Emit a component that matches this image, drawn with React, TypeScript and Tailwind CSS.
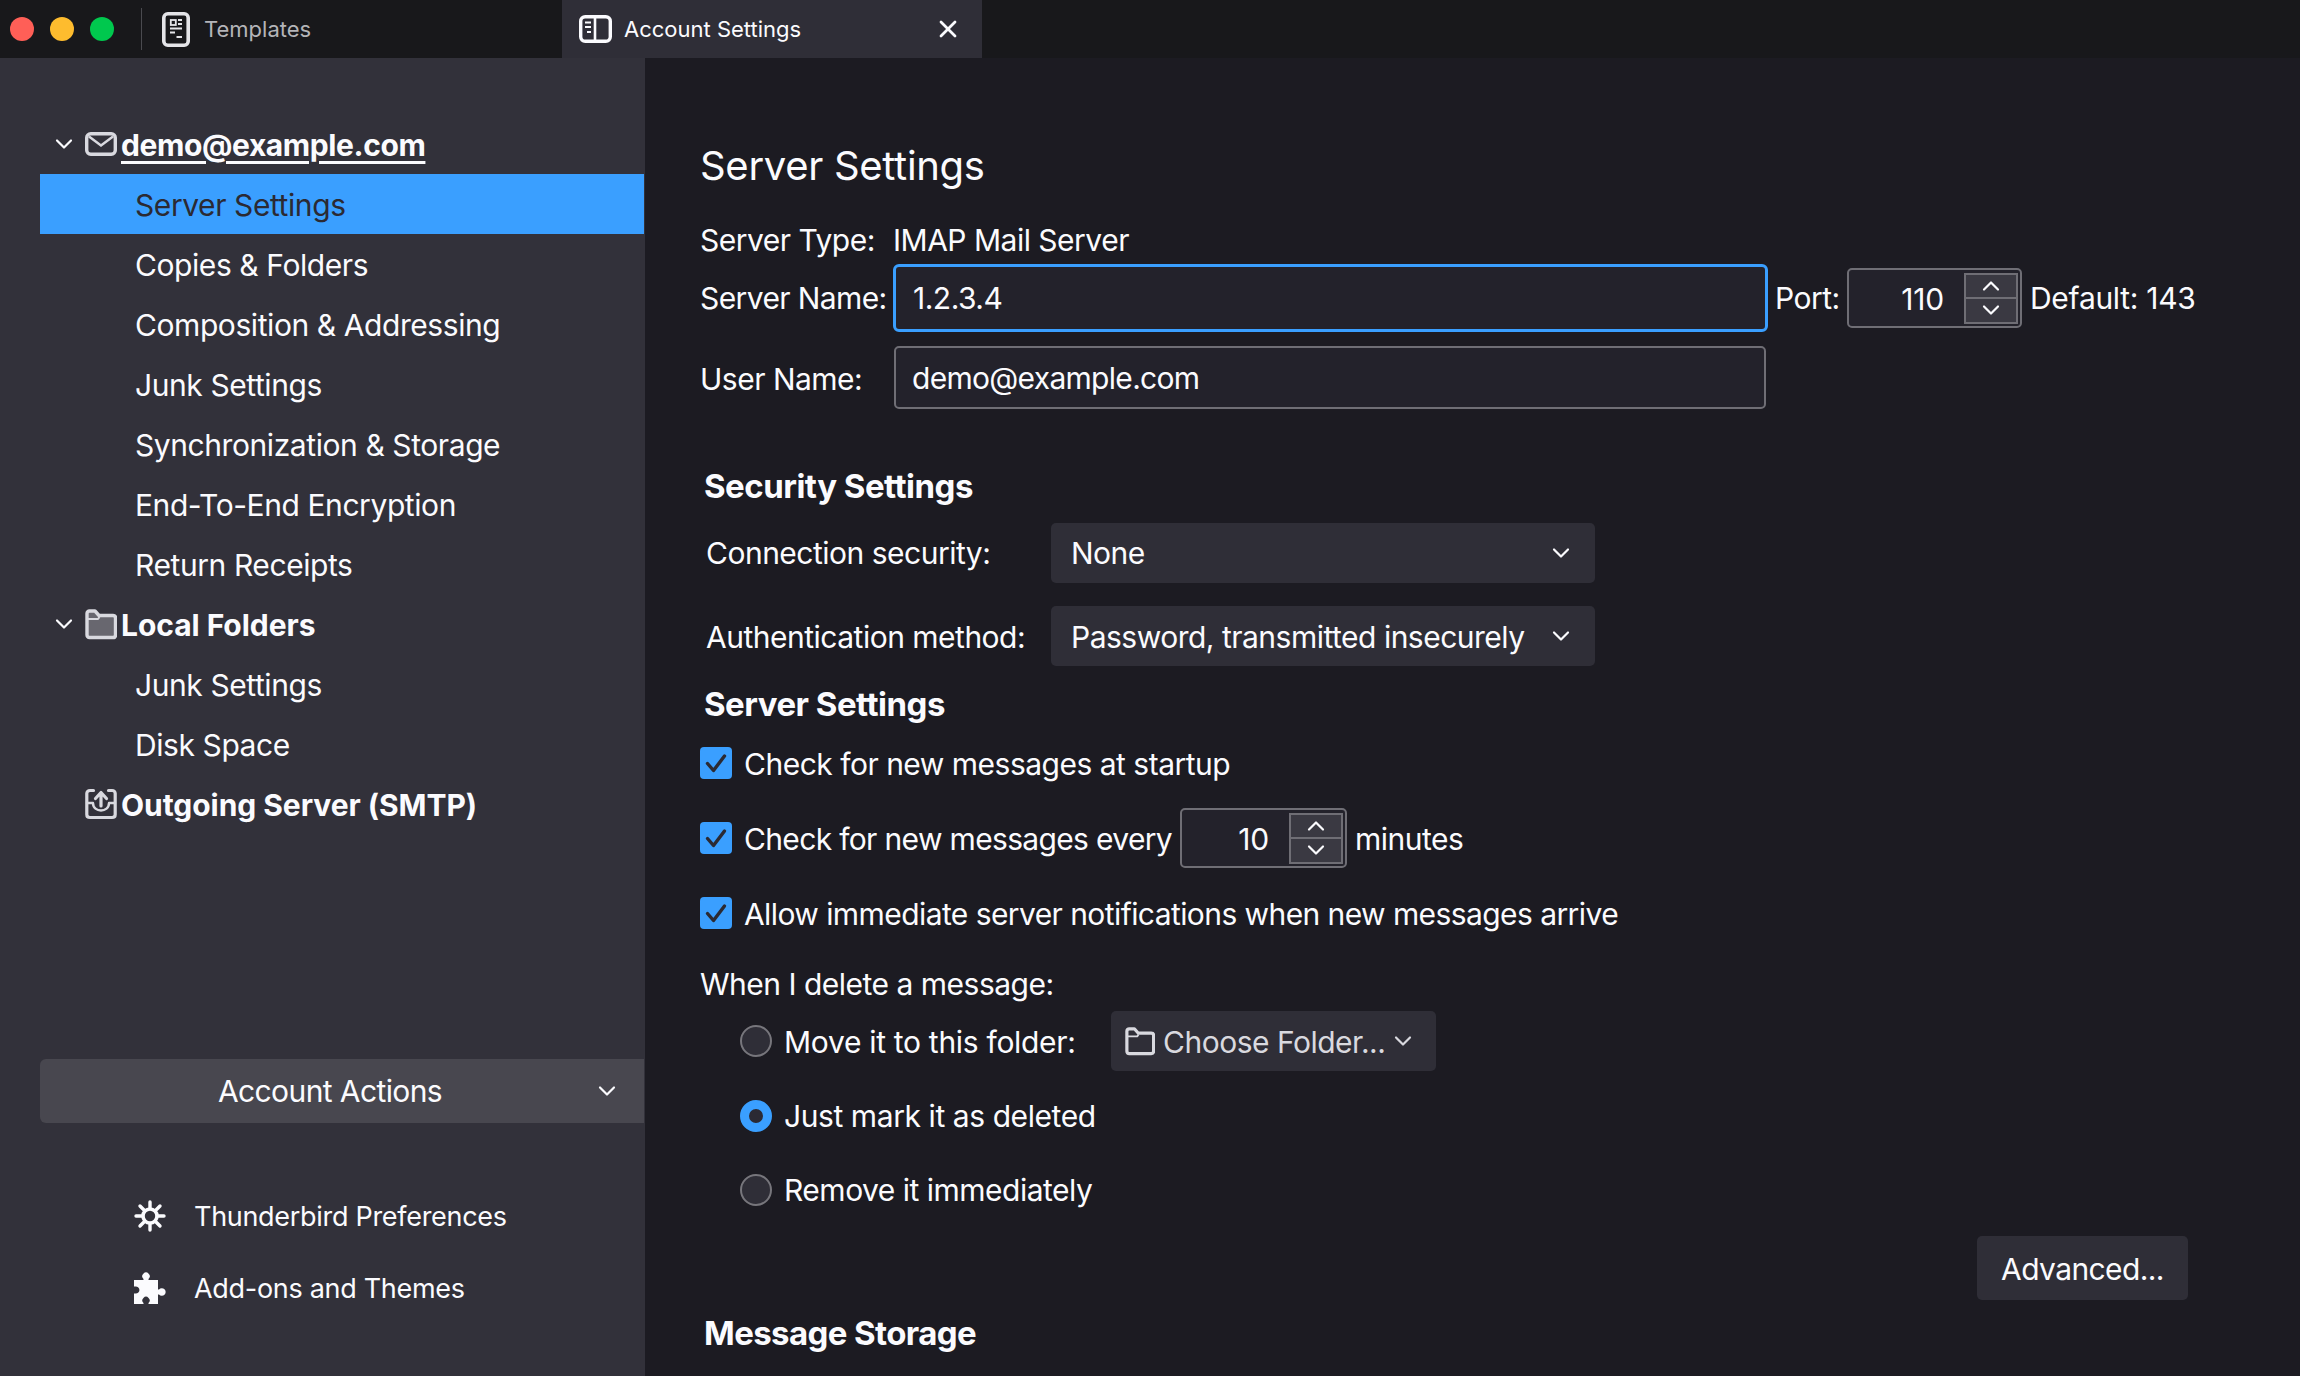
import React from "react";
import { X } from "lucide-react";

const Chevron = ({ className = "w-[18px] h-[12px]" }: { className?: string }) => (
  <svg viewBox="0 0 18 12" className={className} fill="none" stroke="currentColor" strokeWidth="2.2" strokeLinecap="round" strokeLinejoin="round">
    <path d="M2 2.5 L9 9.5 L16 2.5" />
  </svg>
);

const MailIcon = () => (
  <svg viewBox="0 0 32 32" className="w-[32px] h-[32px] shrink-0" fill="none" stroke="#d9d9df" strokeWidth="3.4">
    <rect x="1.7" y="5.7" width="28.6" height="20.6" rx="4" />
    <path d="M4 8.5 L16 17.5 L28 8.5" strokeWidth="2.4" />
  </svg>
);

const FolderIcon = ({ fill = "#68676f", className = "w-[32px] h-[32px]", stroke = "#d9d9df" }: { fill?: string; className?: string; stroke?: string }) => (
  <svg viewBox="0 0 32 32" className={`${className} shrink-0`} fill={fill} stroke={stroke} strokeWidth="3.4" strokeLinejoin="round">
    <path d="M2 5.5 C2 4 3 3 4.5 3 H10 L14 7.5 H28 C29.5 7.5 30.5 8.5 30.5 10 V27 C30.5 28.5 29.5 29.5 28 29.5 H4.5 C3 29.5 2 28.5 2 27 Z" />
    <path d="M2 11 H13 L14.5 9" fill="none" strokeWidth="2" />
  </svg>
);

const OutboxIcon = () => (
  <svg viewBox="0 0 32 32" className="w-[32px] h-[32px] shrink-0" fill="none" stroke="#d9d9df" strokeWidth="3.2" strokeLinejoin="round" strokeLinecap="round">
    <path d="M8.5 2.5 H5 C3 2.5 1.8 3.7 1.8 5.5 V26.5 C1.8 28.3 3 29.5 5 29.5 H27 C29 29.5 30.2 28.3 30.2 26.5 V5.5 C30.2 3.7 29 2.5 27 2.5 H23.5" />
    <path d="M2 15 H8 C8 25 24 25 24 15 H30" strokeWidth="2.4" />
    <path d="M16 18 V5 M10.5 10.5 L16 4.5 L21.5 10.5" strokeWidth="3.2" />
  </svg>
);

const GearIcon = () => (
  <svg viewBox="0 0 32 32" className="w-[32px] h-[32px] shrink-0" fill="none" stroke="#fbfbfe" strokeLinecap="round">
    <circle cx="16" cy="16" r="7" strokeWidth="3.6" />
    <path strokeWidth="3.4" d="M16 2 V8 M16 24 V30 M2 16 H8 M24 16 H30 M6 6 L10.5 10.5 M21.5 21.5 L26 26 M26 6 L21.5 10.5 M10.5 21.5 L6 26" />
  </svg>
);

const PuzzleIcon = () => (
  <svg viewBox="0 0 32 32" className="w-[32px] h-[32px] shrink-0" fill="#fbfbfe">
    <path d="M0 8 H9.5 V7 A3.7 3.7 0 1 1 14.5 7 V8 H24 V17.5 H25 A3.8 3.8 0 1 1 25 22.5 H24 V32 H14.5 V31 A3.6 3.6 0 1 0 9.5 31 V32 H0 V21.5 H1 A3.6 3.6 0 1 0 1 14.5 H0 Z" />
  </svg>
);

const TemplatesIcon = () => (
  <svg viewBox="0 0 28 35" className="w-[28px] h-[35px] shrink-0" fill="none" stroke="#e4e4e8">
    <rect x="1.8" y="1.8" width="24.4" height="31.4" rx="4" strokeWidth="3.6" />
    <rect x="8.8" y="8" width="5" height="5" strokeWidth="1.8" />
    <path d="M16 8 H20 M16 12 H20 M8 16.5 H20 M8 20.5 H13 M14.5 25 H20" strokeWidth="2" />
  </svg>
);

const AccountTabIcon = () => (
  <svg viewBox="0 0 33 28" className="w-[33px] h-[28px] shrink-0" fill="none" stroke="#fbfbfe">
    <rect x="1.7" y="1.7" width="29.6" height="24.6" rx="4.5" strokeWidth="3.4" />
    <path d="M16 2 V26" strokeWidth="2.6" />
    <path d="M6 7.5 H12 M6 12 H12 M8 17 H12" strokeWidth="2.2" />
  </svg>
);

const Spinner = ({ value, className }: { value: string; className: string }) => (
  <div className={`flex items-center justify-end h-[60px] shrink-0 rounded-[5px] border-[2px] border-[#6f6e75] bg-[#23222b] pr-[2px] ${className}`}>
    <span className="flex-1 text-right pr-[20px] pt-[3px] tracking-[-0.2px] text-[#fbfbfe]">{value}</span>
    <div className="flex flex-col w-[54px] h-[51px] border-[2px] border-[#6f6e75] bg-[#3a3942] text-[#fbfbfe]">
      <div className="flex-1 flex items-center justify-center border-b-[2px] border-[#6f6e75]">
        <Chevron className="w-[18px] h-[12px] rotate-180" />
      </div>
      <div className="flex-1 flex items-center justify-center">
        <Chevron className="w-[18px] h-[12px]" />
      </div>
    </div>
  </div>
);

const Checkbox = () => (
  <div className="w-[32px] h-[32px] rounded-[4px] bg-[#3a9fff] flex items-center justify-center shrink-0">
    <svg viewBox="0 0 32 32" className="w-[32px] h-[32px]" fill="none" stroke="#2b2a33" strokeWidth="3.4" strokeLinecap="round" strokeLinejoin="round">
      <path d="M7.5 16.5 L13.5 23.5 L24.5 9" />
    </svg>
  </div>
);

const Radio = ({ checked }: { checked?: boolean }) =>
  checked ? (
    <div className="w-[32px] h-[32px] rounded-full border-[9px] border-[#3a9fff] bg-[#2b2a33] shrink-0" />
  ) : (
    <div className="w-[32px] h-[32px] rounded-full border-[2px] border-[#77767c] bg-[#2f2e37] shrink-0" />
  );

const Select = ({ label, textClass }: { label: string; textClass: string }) => (
  <div className="flex items-center justify-between w-[544px] h-[60px] rounded-[5px] bg-[#2f2e37] pl-[20px] pr-[25px]">
    <span className={textClass}>{label}</span>
    <Chevron className="w-[18px] h-[12px]" />
  </div>
);

const SubRow = ({ label }: { label: string }) => (
  <div className="h-[60px] flex items-center pl-[135px] pt-[3px] tracking-[-0.42px]">{label}</div>
);

const GroupRow = ({ icon, label, chevron, underline }: { icon: React.ReactNode; label: string; chevron?: boolean; underline?: boolean }) => (
  <div className={`h-[60px] flex items-center pl-[55px] font-bold ${underline ? "tracking-[-0.4px]" : "tracking-[-0.05px]"}`}>
    <div className="w-[30px] shrink-0 flex items-center">{chevron && <Chevron className="w-[18px] h-[12px]" />}</div>
    {icon}
    <span className={`ml-[4px] pt-[3px] ${underline ? "underline underline-offset-[5px] decoration-[3px]" : ""}`}>{label}</span>
  </div>
);

export default function App() {
  return (
    <div className="w-[2300px] h-[1376px] overflow-hidden flex flex-col bg-[#1c1b22] text-[#fbfbfe] text-[30px] tracking-[-0.5px] whitespace-nowrap font-['Inter',sans-serif]">
      {/* tab bar */}
      <div className="h-[58px] shrink-0 flex items-center bg-[#18181b] text-[22px] tracking-normal">
        <div className="flex items-center gap-[16px] pl-[10px]">
          <div className="w-[24px] h-[24px] rounded-full bg-[#ff5f57]" />
          <div className="w-[24px] h-[24px] rounded-full bg-[#febc2e]" />
          <div className="w-[24px] h-[24px] rounded-full bg-[#00c84e]" />
        </div>
        <div className="w-[1px] h-[42px] bg-[#4a4a4f] ml-[27px]" />
        <div className="flex items-center h-full w-[420px] pl-[20px]">
          <TemplatesIcon />
          <span className="ml-[14px] text-[#b4b4b8]">Templates</span>
        </div>
        <div className="flex items-center h-full w-[420px] pl-[17px] bg-[#2f2e37]">
          <AccountTabIcon />
          <span className="ml-[12px] flex-1">Account Settings</span>
          <X className="w-[28px] h-[28px] mr-[20px]" strokeWidth={2.4} />
        </div>
      </div>

      <div className="flex-1 flex min-h-0">
        {/* sidebar */}
        <div className="w-[645px] shrink-0 bg-[#32313a] pt-[56px] flex flex-col">
          <GroupRow icon={<MailIcon />} label="demo@example.com" chevron underline />
          <div className="h-[60px] flex items-center ml-[40px] mr-[1px] pl-[95px] pt-[3px] tracking-[-0.42px] bg-[#3a9fff] text-[#2b2a33]">Server Settings</div>
          <SubRow label="Copies & Folders" />
          <SubRow label="Composition & Addressing" />
          <SubRow label="Junk Settings" />
          <SubRow label="Synchronization & Storage" />
          <SubRow label="End-To-End Encryption" />
          <SubRow label="Return Receipts" />
          <GroupRow icon={<FolderIcon />} label="Local Folders" chevron />
          <SubRow label="Junk Settings" />
          <SubRow label="Disk Space" />
          <GroupRow icon={<OutboxIcon />} label="Outgoing Server (SMTP)" />

          <div className="mt-[225px] ml-[40px] mr-[1px] h-[64px] rounded-l-[6px] bg-[#48474f] flex items-center pr-[28px] tracking-[-0.6px]">
            <span className="flex-1 text-center pl-[22px] pt-[1px]">Account Actions</span>
            <Chevron className="w-[18px] h-[12px]" />
          </div>

          <div className="mt-[73px] h-[40px] flex items-center pl-[134px] text-[27px] tracking-[-0.3px]">
            <GearIcon />
            <span className="ml-[28px] pt-[2px]">Thunderbird Preferences</span>
          </div>
          <div className="mt-[32px] h-[40px] flex items-center pl-[134px] text-[27px] tracking-[-0.3px]">
            <PuzzleIcon />
            <span className="ml-[28px] pt-[2px]">Add-ons and Themes</span>
          </div>
        </div>

        {/* settings pane */}
        <div className="flex-1 min-w-0 pl-[55px] pt-[78px] flex flex-col">
          <div className="h-[60px] flex items-center text-[40px] tracking-[-0.3px]">Server Settings</div>

          <div className="mt-[20px] h-[48px] flex items-center">
            <span className="w-[193px]">Server Type:</span>
            <span>IMAP Mail Server</span>
          </div>

          <div className="h-[68px] flex items-center">
            <span className="w-[193px] shrink-0 tracking-[-0.6px]">Server Name:</span>
            <div className="w-[875px] h-[68px] shrink-0 rounded-[6px] border-[3px] border-[#3a9fff] bg-[#23222b] flex items-center pl-[17px]">1.2.3.4</div>
            <span className="ml-[7px] w-[72px] shrink-0">Port:</span>
            <Spinner value="110" className="w-[175px]" />
            <span className="ml-[8px] tracking-[-0.3px]">Default: 143</span>
          </div>

          <div className="mt-[14px] h-[63px] flex items-center">
            <span className="w-[194px] shrink-0 pt-[3px]">User Name:</span>
            <div className="w-[872px] h-[63px] shrink-0 rounded-[5px] border-[2px] border-[#6f6e75] bg-[#23222b] flex items-center pl-[16px] pt-[2px] tracking-[-0.7px]">demo@example.com</div>
          </div>

          <div className="mt-[55px] h-[44px] flex items-center pl-[4px] pt-[2px] font-bold text-[33px]">Security Settings</div>

          <div className="mt-[15px] flex items-center pl-[6px]">
            <span className="w-[345px]">Connection security:</span>
            <Select label="None" textClass="" />
          </div>
          <div className="mt-[23px] flex items-center pl-[6px]">
            <span className="w-[345px] pt-[3px]">Authentication method:</span>
            <Select label="Password, transmitted insecurely" textClass="pt-[3px]" />
          </div>

          <div className="mt-[15px] h-[44px] flex items-center pl-[4px] pt-[3px] font-bold text-[33px]">Server Settings</div>

          <div className="mt-[18px] h-[40px] flex items-center gap-[12px]">
            <Checkbox />
            <span className="pt-[3px]">Check for new messages at startup</span>
          </div>
          <div className="mt-[25px] h-[60px] flex items-center">
            <Checkbox />
            <span className="ml-[12px] pt-[3px] tracking-[-0.66px]">Check for new messages every</span>
            <Spinner value="10" className="w-[167px] ml-[8px]" />
            <span className="ml-[8px] pt-[3px]">minutes</span>
          </div>
          <div className="mt-[25px] h-[40px] flex items-center gap-[12px]">
            <Checkbox />
            <span className="pt-[3px] tracking-[-0.58px]">Allow immediate server notifications when new messages arrive</span>
          </div>

          <div className="mt-[30px] h-[40px] flex items-center pt-[3px]">When I delete a message:</div>

          <div className="mt-[8px] h-[60px] flex items-center pl-[40px]">
            <Radio />
            <span className="ml-[12px] w-[327px] pt-[3px] tracking-[-0.3px]">Move it to this folder:</span>
            <div className="w-[325px] h-[60px] rounded-[5px] bg-[#2f2e37] flex items-center pl-[14px] text-[#d9d9df]">
              <FolderIcon fill="none" className="w-[30px] h-[30px]" />
              <span className="ml-[8px] flex-1 pt-[3px]">Choose Folder...</span>
              <Chevron className="w-[18px] h-[12px] mr-[24px]" />
            </div>
          </div>
          <div className="mt-[25px] h-[40px] flex items-center pl-[40px]">
            <Radio checked />
            <span className="ml-[12px] tracking-[-0.42px]">Just mark it as deleted</span>
          </div>
          <div className="mt-[34px] h-[40px] flex items-center pl-[40px]">
            <Radio />
            <span className="ml-[12px]">Remove it immediately</span>
          </div>

          <div className="mt-[26px] self-end mr-[112px] w-[211px] h-[64px] rounded-[5px] bg-[#2f2e37] flex items-center justify-center pt-[3px] tracking-[-0.6px]">Advanced...</div>

          <div className="mt-[10px] h-[44px] flex items-center pl-[4px] pt-[4px] font-bold text-[33px] tracking-[-0.6px]">Message Storage</div>
        </div>
      </div>
    </div>
  );
}
